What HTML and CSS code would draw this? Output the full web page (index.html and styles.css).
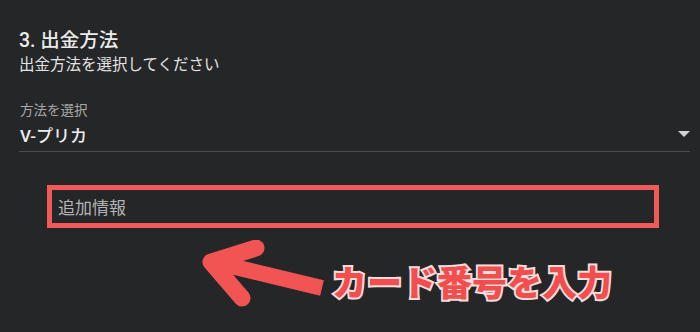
FILE: index.html
```html
<!DOCTYPE html>
<html lang="ja">
<head>
<meta charset="utf-8">
<link rel="stylesheet" href="styles.css">
</head>
<body>
<div class="page">
  <section class="step">
    <h2 class="step-title">3. 出金方法</h2>
    <p class="step-sub">出金方法を選択してください</p>
    <div class="select">
      <div class="select-label">方法を選択</div>
      <div class="select-row">
        <span class="select-value">V-プリカ</span>
        <span class="select-caret"></span>
      </div>
    </div>
    <div class="extra">
      <div class="extra-field">追加情報</div>
    </div>
  </section>
  <svg class="arrow" width="140" height="70" viewBox="0 0 140 70">
    <line x1="128" y1="48" x2="20" y2="22" stroke="#f25454" stroke-width="16" stroke-linecap="butt"/>
    <polyline points="62,8 17,22 48,58" fill="none" stroke="#f25454" stroke-width="17" stroke-linecap="round" stroke-linejoin="round"/>
  </svg>
  <div class="callout">カード番号を入力</div>
</div>
</body>
</html>
```
FILE: styles.css
```css
html, body {
  margin: 0;
  padding: 0;
  background: #252628;
}
.page {
  position: relative;
  width: 700px;
  height: 332px;
  overflow: hidden;
  font-family: "Roboto", "Noto Sans CJK JP", sans-serif;
  color: #e6e6e6;
}
.step {
  padding: 28px 10px 0 19px;
}
.step-title {
  margin: 0;
  font-size: 19.5px;
  line-height: 26px;
  font-weight: 500;
  color: #ececec;
}
.step-sub {
  margin: 0;
  font-size: 15.5px;
  line-height: 22px;
  color: #e2e2e2;
}
.select {
  margin-top: 26px;
  padding-left: 1px;
  border-bottom: 1px solid #4a4b4e;
}
.select-label {
  font-size: 13.5px;
  line-height: 17px;
  color: #a9a9a9;
}
.select-row {
  display: flex;
  align-items: center;
  justify-content: space-between;
  height: 30px;
  padding-bottom: 2px;
}
.select-value {
  font-size: 17px;
  font-weight: 500;
  color: #ededed;
}
.select-caret {
  width: 0;
  height: 0;
  border-left: 6px solid transparent;
  border-right: 6px solid transparent;
  border-top: 6px solid #d4d4d4;
}
.extra {
  padding: 33px 0 0 28px;
}
.extra-field {
  width: 596px;
  height: 33px;
  border: 5px solid #f25a5a;
  padding-left: 6px;
  display: flex;
  align-items: center;
  font-size: 17px;
  color: #b4b4b4;
}
.arrow {
  position: absolute;
  left: 194px;
  top: 240px;
}
.callout {
  position: absolute;
  left: 332px;
  top: 258px;
  font-family: "Noto Sans CJK JP", sans-serif;
  font-weight: 900;
  font-size: 35px;
  line-height: 46px;
  color: #f24e4e;
  -webkit-text-stroke: 4px #f3dede;
  paint-order: stroke fill;
}
```
